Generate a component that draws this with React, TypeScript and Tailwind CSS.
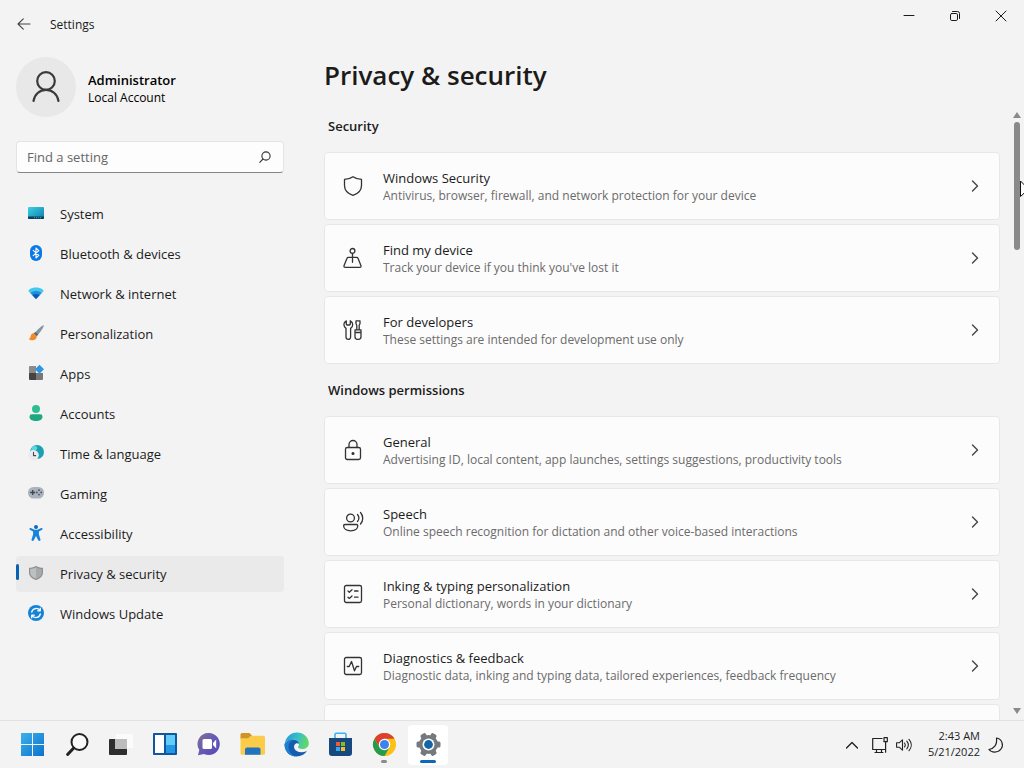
import type { ReactNode } from "react";

const stroke = {
  fill: "none",
  stroke: "currentColor",
  strokeLinecap: "round" as const,
  strokeLinejoin: "round" as const,
};

const navItems: { label: string; icon: ReactNode }[] = [
  {
    label: "System",
    icon: (
      <>
        <defs>
          <linearGradient id="sys" x1="0" y1="0" x2="1" y2="1">
            <stop offset="0" stopColor="#3fd0e8" />
            <stop offset="1" stopColor="#0c7fa6" />
          </linearGradient>
        </defs>
        <rect x="0" y="2" width="16" height="12" rx="1" fill="url(#sys)" />
        <path d="M0 11.500h16v1.500a1 1 0 0 1-1 1H1a1 1 0 0 1-1-1z" fill="#0b3f5c" />
        <path d="M6 12.700h1M8 12.700h1M10 12.700h1M12 12.700h1" stroke="#4cc3e0" strokeWidth=".8" />
      </>
    ),
  },
  {
    label: "Bluetooth & devices",
    icon: (
      <>
        <rect x="2" y="0" width="12" height="16" rx="6" fill="#0a78e6" />
        <path d="M5.200 5.300l5.600 5.100L8 13V3l2.800 2.600-5.600 5.100" {...stroke} stroke="#fff" strokeWidth="1.100" />
      </>
    ),
  },
  {
    label: "Network & internet",
    icon: (
      <>
        <path d="M.8 6.400C.2 5.600.6 5 1.400 4.400c4-2.600 9.200-2.600 13.200 0 .8.600 1.200 1.200.6 2L8 14z" fill="#42c8ea" />
        <path d="M2.400 8.100c3.200-2.700 8-2.700 11.200 0L8 14z" fill="#1f8fdc" />
        <path d="M4.400 10.200c2.200-1.600 5-1.600 7.200 0L8 14z" fill="#1456b8" />
      </>
    ),
  },
  {
    label: "Personalization",
    icon: (
      <>
        <path d="M15.800.3c-.9-.6-7.300 5-9.500 8.200l2.600 2.400C11.500 8.500 16.500 1.400 15.800.3z" fill="#8497a5" />
        <path d="M7.300 7l2.800 2.500-1.500 1.700-3-2.700z" fill="#5b6770" />
        <path d="M5.600 8.200c-2 .2-2.700 1.500-3 3-.2 1.300-.8 2.200-1.900 2.700 2.600 2.400 8.300 1.600 8-3z" fill="#f08a2c" />
      </>
    ),
  },
  {
    label: "Apps",
    icon: (
      <>
        <path d="M2 1h6v7H1V2a1 1 0 0 1 1-1z" fill="#8b8b8b" />
        <path d="M1 8h7v7H2a1 1 0 0 1-1-1z" fill="#444" />
        <path d="M8 8h7v6a1 1 0 0 1-1 1H8z" fill="#777" />
        <path d="M11.500-.3L16 4.200l-4.500 4.500L7 4.200z" fill="#2b95e6" />
      </>
    ),
  },
  {
    label: "Accounts",
    icon: (
      <>
        <circle cx="8" cy="4" r="4" fill="#2dbf93" />
        <path d="M1.500 11.500A2.300 2.300 0 0 1 3.800 9.300h8.400a2.300 2.300 0 0 1 2.300 2.200C14.500 14.500 12 16 8 16s-6.500-1.500-6.500-4.500z" fill="#1fa87f" />
      </>
    ),
  },
  {
    label: "Time & language",
    icon: (
      <>
        <circle cx="9" cy="7" r="7" fill="#1ba0b2" />
        <path d="M5 1.500c3-1.500 5 .5 4 2.500S6 6 4 7 2 5 5 1.500z" fill="#5fd6dc" />
        <circle cx="5.500" cy="10.200" r="5.300" fill="#eceaee" />
        <path d="M5.500 7.300v3.300h2.200" {...stroke} stroke="#4a4a55" strokeWidth="1.100" />
      </>
    ),
  },
  {
    label: "Gaming",
    icon: (
      <>
        <rect x="0" y="2" width="16" height="11.500" rx="5.500" fill="#aab3bc" />
        <path d="M4.700 5v5M2.200 7.500h5" stroke="#3d464f" strokeWidth="1.300" />
        <g fill="#4b545d">
          <circle cx="11" cy="5.200" r=".9" />
          <circle cx="11" cy="9.600" r=".9" />
          <circle cx="8.900" cy="7.400" r=".9" />
          <circle cx="13.200" cy="7.400" r=".9" />
        </g>
      </>
    ),
  },
  {
    label: "Accessibility",
    icon: (
      <>
        <circle cx="8" cy="2" r="2" fill="#1469b8" />
        <path d="M2.800 3L6.500 4.700h3L13.200 3c1.300-.4 2 1.200.9 1.800L10.900 6.500v3l1.600 5.100c.3 1.400-1.700 2-2.300.7L8 11l-2.200 4.300c-.6 1.300-2.600.7-2.300-.7l1.600-5.100v-3L1.900 4.800C.8 4.200 1.500 2.600 2.800 3z" fill="#1883dc" />
      </>
    ),
  },
  {
    label: "Privacy & security",
    icon: (
      <>
        <path d="M8 .8c2 1.500 4.300 2 7 2v4.700c0 3.600-2.500 6-7 7.500C3.500 13.500 1 11.100 1 7.500V2.800c2.700 0 5-.5 7-2z" fill="#8d9192" />
        <path d="M8 2.200c1.700 1.100 3.500 1.600 5.800 1.700v3.600c0 3-2 4.900-5.800 6.200z" fill="#a6aaab" />
        <path d="M8 2.200C6.300 3.300 4.500 3.800 2.200 3.900v3.600c0 3 2 4.900 5.800 6.200z" fill="#bcc0c1" />
      </>
    ),
  },
  {
    label: "Windows Update",
    icon: (
      <>
        <circle cx="8" cy="8" r="8" fill="#1584d8" />
        <path d="M3.700 7A4.600 4.600 0 0 1 12 5.500M12.300 9A4.600 4.600 0 0 1 4 10.500M12.300 3.200v2.600H9.700M3.700 12.800v-2.600h2.600" {...stroke} stroke="#fff" strokeWidth="1.300" />
      </>
    ),
  },
];

type Row = { title: string; text: string; icon: ReactNode };

const securityRows: Row[] = [
  {
    title: "Windows Security",
    text: "Antivirus, browser, firewall, and network protection for your device",
    icon: <path d="M10 .7c2.300 1.700 5 2.600 8.500 2.700v6c0 4.600-3 8-8.500 10-5.500-2-8.500-5.400-8.500-10v-6C5 3.300 7.700 2.400 10 .7z" />,
  },
  {
    title: "Find my device",
    text: "Track your device if you think you've lost it",
    icon: (
      <>
        <circle cx="9.500" cy="2.900" r="2.400" />
        <path d="M9.500 5.300v9M5.400 9.300h8.200a1.500 1.500 0 0 1 1.400 1l2.900 7.200c.4 1.100-.1 1.800-1.100 1.800H2.200c-1 0-1.500-.7-1.100-1.800L4 10.300a1.500 1.500 0 0 1 1.400-1z" />
      </>
    ),
  },
  {
    title: "For developers",
    text: "These settings are intended for development use only",
    icon: (
      <>
        <path d="M3.300.8C1.600 1.600.9 3 .9 4.600c0 1.700.9 3 2.100 3.800v8.700a2.300 2.300 0 0 0 4.600 0V8.400C9 7.600 9.700 6.300 9.700 4.600 9.700 3 9 1.600 7.300.8v3.400L6.500 5H4.100l-.8-.8z" />
        <path d="M13 .8h4v3l-.8 1.400v4.600h-2.400V5.200L13 3.800zM12 9.800h6v7a2.500 2.500 0 0 1-2.500 2.500h-1A2.500 2.500 0 0 1 12 16.800zM12 12.500h6" />
      </>
    ),
  },
];

const permissionRows: Row[] = [
  {
    title: "General",
    text: "Advertising ID, local content, app launches, settings suggestions, productivity tools",
    icon: (
      <>
        <rect x="2.500" y="7.500" width="15" height="12" rx="1.800" />
        <path d="M6 7.500V4.500a4 4 0 0 1 8 0v3" />
        <circle cx="10" cy="13.500" r=".9" fill="currentColor" />
      </>
    ),
  },
  {
    title: "Speech",
    text: "Online speech recognition for dictation and other voice-based interactions",
    icon: (
      <>
        <circle cx="7.500" cy="6" r="3.900" />
        <path d="M2 12.500h11.500c.8 0 1.300.6 1.300 1.300 0 3-2.900 5-7 5s-7.200-2-7.200-5c0-.7.600-1.300 1.400-1.300zM14.500 2.500c1.600 2 1.600 5 0 7M17.500.5c3 3.300 3 8 0 11.500" />
      </>
    ),
  },
  {
    title: "Inking & typing personalization",
    text: "Personal dictionary, words in your dictionary",
    icon: (
      <>
        <rect x="1.500" y="1.500" width="17" height="17" rx="1.800" />
        <path d="M5 7l1.300 1.200L9 5.800M11.500 7H15M5 13.200l1.300 1.200L9 12M11.500 13.200H15" />
      </>
    ),
  },
  {
    title: "Diagnostics & feedback",
    text: "Diagnostic data, inking and typing data, tailored experiences, feedback frequency",
    icon: (
      <>
        <rect x="1.500" y="1.500" width="17" height="17" rx="1.800" />
        <path d="M4.300 10.500h1.900L8.500 5.500l3 9.300 2-4.300h2.200" />
      </>
    ),
  },
];

const taskbarApps: { name: string; icon: ReactNode; state?: "open" | "active" }[] = [
  {
    name: "Start",
    icon: (
      <>
        <defs>
          <linearGradient id="win" x1="0" y1="0" x2="24" y2="24" gradientUnits="userSpaceOnUse">
            <stop offset="0" stopColor="#3fb4ec" />
            <stop offset="1" stopColor="#0b72cc" />
          </linearGradient>
        </defs>
        <path d="M1 1h11v11H1zM13 1h11v11H13zM1 13h11v11H1zM13 13h11v11H13z" fill="url(#win)" />
      </>
    ),
  },
  {
    name: "Search",
    icon: (
      <>
        <circle cx="15.500" cy="10" r="8" fill="#fafafa" stroke="#222" strokeWidth="2" />
        <path d="M9.500 16.200L3.600 22.500" stroke="#222" strokeWidth="3" strokeLinecap="round" />
      </>
    ),
  },
  {
    name: "Task view",
    icon: (
      <>
        <path d="M8 2h17v14H8z" fill="#fbfbfb" />
        <rect x="1" y="7" width="18" height="16" rx="1" fill="#2e2e2e" />
        <path d="M7 7h12v10H7z" fill="#bcbcbc" />
      </>
    ),
  },
  {
    name: "Widgets",
    icon: (
      <>
        <rect x="1" y="1" width="24" height="22" rx="1" fill="#10579c" />
        <path d="M3 3h9v18H3z" fill="#fff" />
        <path d="M14 3h9v10h-9z" fill="#62cdf8" />
        <path d="M14 13h9v8h-9z" fill="#2199e6" />
      </>
    ),
  },
  {
    name: "Chat",
    icon: (
      <>
        <defs>
          <linearGradient id="chat" x1="0" y1="0" x2="1" y2="1">
            <stop offset="0" stopColor="#83728f" />
            <stop offset=".5" stopColor="#6659b8" />
            <stop offset="1" stopColor="#5346b4" />
          </linearGradient>
        </defs>
        <path d="M13 1a11 11 0 1 1-5 20.900L2 23.300 3.300 18A11 11 0 0 1 13 1z" fill="url(#chat)" />
        <rect x="6.500" y="7" width="9.500" height="10" rx="1.500" fill="#fff" />
        <path d="M17 11l3.200-3.500v9L17 13z" fill="#fff" />
      </>
    ),
  },
  {
    name: "File Explorer",
    icon: (
      <>
        <path d="M.5 2.500A1.500 1.500 0 0 1 2 1h7.500L12 3.500 9 7H.5z" fill="#cf9423" />
        <path d="M.5 6.300H8l3-2.500h12.500A1.500 1.500 0 0 1 25 5.300v15.900a1.500 1.500 0 0 1-1.500 1.500H2a1.500 1.500 0 0 1-1.500-1.500z" fill="#fbcb4a" />
        <path d="M5 17.500a2 2 0 0 1 2-2h11.500a2 2 0 0 1 2 2v5.200H5z" fill="#2173c0" />
      </>
    ),
  },
  {
    name: "Edge",
    icon: (
      <>
        <defs>
          <linearGradient id="edgeTop" x1="0" y1="0" x2="1" y2=".3">
            <stop offset="0" stopColor="#2295d8" />
            <stop offset=".55" stopColor="#34bfcb" />
            <stop offset="1" stopColor="#62d76c" />
          </linearGradient>
        </defs>
        <path d="M.9 11C2 4.800 7 .5 12.800.5c6.800 0 12 5 12 10.500 0 4-3 6-6.500 6-2.700 0-4.200-1-4.200-2 0-.8 1-1 1-2.900C14.800 9.300 12 7.500 9 7.500c-4 0-7 1.200-8.100 3.500z" fill="url(#edgeTop)" />
        <path d="M.6 12C2 9 5.500 7.400 9 7.500c3.300.1 6 2.200 6.100 4.500-.8-.7-2-1-3.100-.5-2 .9-2.400 3.300-1.500 5.300 1.600 3.400 7 4.700 12.300 2.300-2 3.300-5.900 5.400-10.300 5.400C5.500 24.500.2 19 .6 12z" fill="#155cae" />
        <path d="M9.500 8c-4 1.500-5.800 5-4.600 9.300 1 3.800 3.800 6.600 7.600 7.200C5.500 24.500.2 19 .6 12 2 9 6 7.200 9.500 8z" fill="#1a80cf" />
      </>
    ),
  },
  {
    name: "Store",
    icon: (
      <>
        <path d="M7 7V2.500A1.200 1.200 0 0 1 8.200 1.300h8.600A1.200 1.200 0 0 1 18 2.500V7" fill="none" stroke="#38b5ea" strokeWidth="1.600" />
        <path d="M1 6h23v15a3 3 0 0 1-3 3H4a3 3 0 0 1-3-3z" fill="#17497e" />
        <path d="M8 10h4v4H8z" fill="#ef5a36" />
        <path d="M13 10h4v4h-4z" fill="#83bd25" />
        <path d="M8 15h4v4H8z" fill="#32a9ea" />
        <path d="M13 15h4v4h-4z" fill="#fbbb22" />
      </>
    ),
  },
  {
    name: "Chrome",
    state: "open",
    icon: (
      <>
        <circle cx="12.500" cy="12.500" r="11.500" fill="#fbc116" />
        <path d="M2.540 6.750A11.500 11.500 0 0 1 22.460 6.750H12.500L7.520 15.380z" fill="#dd4032" />
        <path d="M2.540 6.750A11.500 11.500 0 0 0 12.500 24l4.980-8.620H7.520z" fill="#259c4c" />
        <circle cx="12.500" cy="12.500" r="5.700" fill="#fff" />
        <circle cx="12.500" cy="12.500" r="4.500" fill="#3b82ec" />
      </>
    ),
  },
  {
    name: "Settings",
    state: "active",
    icon: (
      <>
        <g fill="#75797d">
          <circle cx="12.500" cy="12.500" r="9.500" />
          <rect x="9.500" y=".5" width="6" height="24" rx="1.500" transform="rotate(30 12.500 12.500)" />
          <rect x="9.500" y=".5" width="6" height="24" rx="1.500" transform="rotate(90 12.500 12.500)" />
          <rect x="9.500" y=".5" width="6" height="24" rx="1.500" transform="rotate(150 12.500 12.500)" />
        </g>
        <circle cx="12.500" cy="12.500" r="6" fill="#fff" />
        <circle cx="12.500" cy="12.500" r="4.400" fill="#1664a8" />
      </>
    ),
  },
];

function SettingRow({ row }: { row: Row }) {
  return (
    <button className="flex h-[68px] w-full shrink-0 items-center rounded border border-[#e7e7e7] bg-[#fcfcfc] px-[18px] text-left">
      <svg className="mr-5 h-5 w-5 shrink-0 overflow-visible text-[#333]" viewBox="0 0 20 20" {...stroke} strokeWidth="1.300">
        {row.icon}
      </svg>
      <span className="min-w-0 flex-1 pt-0.5">
        <span className="block text-[13px] leading-[18px] text-[#1b1b1b]">{row.title}</span>
        <span className="block truncate text-[12px] leading-[18px] text-[#6b6b6b]">{row.text}</span>
      </span>
      <svg className="h-3 w-3 text-[#444]" viewBox="0 0 12 12" {...stroke} strokeWidth="1.400">
        <path d="M3.500 1l5 5-5 5" />
      </svg>
    </button>
  );
}

function Section({ title, children }: { title: string; children: ReactNode }) {
  return (
    <section className="shrink-0">
      <h2 className="flex h-[52px] items-center px-1 pt-0.5 text-[13px] font-semibold text-[#1b1b1b]">{title}</h2>
      <div className="flex flex-col gap-1">{children}</div>
    </section>
  );
}

function WindowButton({ label, children }: { label: string; children: ReactNode }) {
  return (
    <button aria-label={label} className="flex h-8 w-[46px] items-center justify-center">
      <svg className="h-3 w-3" viewBox="0 0 12 12" {...stroke}>
        {children}
      </svg>
    </button>
  );
}

export default function App() {
  return (
    <div className="relative flex h-screen flex-col overflow-hidden bg-[#f3f3f3] font-['Open_Sans','Noto_Sans',sans-serif] text-[#1b1b1b]">
      <header className="flex h-12 shrink-0 items-start justify-between">
        <div className="flex h-12 items-center">
          <button aria-label="Back" className="flex h-12 w-12 items-center justify-center text-[#444]">
            <svg className="h-3.5 w-3.5" viewBox="0 0 14 14" {...stroke} strokeWidth="1.100">
              <path d="M13 7H1M6.300 1.800L1 7l5.300 5.200" />
            </svg>
          </button>
          <span className="pt-0.5 pl-0.5 text-[12px]">Settings</span>
        </div>
        <div className="flex">
          <WindowButton label="Minimize">
            <path d="M1 5.500h10" />
          </WindowButton>
          <WindowButton label="Restore">
            <rect x="1.500" y="3.500" width="7" height="7" rx="1.300" />
            <path d="M3.500 1.500h5A2 2 0 0 1 10.500 3.500v5" />
          </WindowButton>
          <WindowButton label="Close">
            <path d="M1 1l10 10M11 1L1 11" />
          </WindowButton>
        </div>
      </header>

      <div className="flex min-h-0 flex-1">
        <aside className="flex w-[300px] shrink-0 flex-col px-4 pt-[9px]">
          <div className="flex items-center gap-3">
            <div className="flex h-[60px] w-[60px] items-center justify-center rounded-full bg-[#e8e8e8]">
              <svg className="h-8 w-7 text-[#3a3a3a]" viewBox="0 0 28 32" {...stroke} strokeWidth="2.200">
                <circle cx="14" cy="10" r="8.800" />
                <path d="M1.500 30C2.500 23.500 7.500 18.800 14 18.800S25.500 23.500 26.500 30" />
              </svg>
            </div>
            <div className="pt-1 text-black">
              <p className="text-[13px] leading-[18px] font-semibold">Administrator</p>
              <p className="text-[12px] leading-[18px]">Local Account</p>
            </div>
          </div>

          <div className="mt-6 flex h-8 shrink-0 items-center rounded border border-[#e4e4e4] border-b-[#868686] bg-[#fdfdfd] px-2.5">
            <input
              type="text"
              aria-label="Find a setting"
              placeholder="Find a setting"
              className="min-w-0 flex-1 bg-transparent pt-0.5 text-[13px] outline-none placeholder:text-[#666]"
            />
            <svg className="mr-0.5 h-3 w-3 text-[#333]" viewBox="0 0 12 12" {...stroke} strokeWidth="1.100">
              <circle cx="7" cy="5" r="4.100" />
              <path d="M4 8L.8 11.300" />
            </svg>
          </div>

          <nav className="mt-[23px] flex flex-col gap-1">
            {navItems.map((item) => {
              const selected = item.label === "Privacy & security";
              return (
                <a
                  key={item.label}
                  href="#"
                  className={
                    selected
                      ? "relative flex h-9 items-center gap-4 rounded bg-[#eaeaea] pb-0.5 pl-3 text-[13px]"
                      : "flex h-9 items-center gap-4 rounded pb-0.5 pl-3 text-[13px]"
                  }
                >
                  {selected && <span className="absolute top-2 left-0 h-4 w-[3px] rounded-full bg-[#0a62ae]" />}
                  <svg className="h-4 w-4 shrink-0 overflow-visible" viewBox="0 0 16 16">
                    {item.icon}
                  </svg>
                  <span className="pt-1">{item.label}</span>
                </a>
              );
            })}
          </nav>
        </aside>

        <main className="flex min-w-0 flex-1 flex-col pl-6">
          <h1 className="flex h-[52px] shrink-0 items-center pt-0.5 text-[26px] font-semibold">Privacy & security</h1>
          <div className="flex min-h-0 flex-1">
            <div className="flex min-w-0 flex-1 flex-col overflow-hidden">
              <Section title="Security">
                {securityRows.map((row) => (
                  <SettingRow key={row.title} row={row} />
                ))}
              </Section>
              <Section title="Windows permissions">
                {permissionRows.map((row) => (
                  <SettingRow key={row.title} row={row} />
                ))}
                <div className="h-[68px] rounded border border-[#e7e7e7] bg-[#fcfcfc]" />
              </Section>
            </div>
            <div className="ml-2.5 flex w-3.5 shrink-0 flex-col items-center pt-3 pb-1.5">
              <svg className="h-1.5 w-2 shrink-0" viewBox="0 0 8 6">
                <path d="M4 0l4 6H0z" fill="#8a8a8a" />
              </svg>
              <div className="mt-1 h-32 w-1.5 rounded-full bg-[#8a8a8a]" />
              <svg className="mt-auto h-1.5 w-2 shrink-0" viewBox="0 0 8 6">
                <path d="M0 0h8L4 6z" fill="#8a8a8a" />
              </svg>
            </div>
          </div>
        </main>
      </div>

      <footer className="flex h-12 shrink-0 items-center justify-between border-t border-[#e2e2e2] bg-[#f3f3f3] pr-5 pl-3">
        <div className="flex gap-1">
          {taskbarApps.map((app) => (
            <button
              key={app.name}
              aria-label={app.name}
              className={
                app.state === "active"
                  ? "relative flex h-10 w-10 items-center justify-center rounded bg-white"
                  : "relative flex h-10 w-10 items-center justify-center rounded"
              }
            >
              <svg className="h-[25px] w-[25px] overflow-visible" viewBox="0 0 25 25">
                {app.icon}
              </svg>
              {app.state === "open" && <span className="absolute bottom-0.5 h-[3px] w-1.5 rounded-full bg-[#8a8a8a]" />}
              {app.state === "active" && <span className="absolute bottom-0.5 h-[3px] w-4 rounded-full bg-[#0f67b8]" />}
            </button>
          ))}
        </div>
        <div className="flex items-center text-[#222]">
          <button aria-label="Show hidden icons" className="mr-3.5">
            <svg className="h-3 w-3" viewBox="0 0 12 12" {...stroke} strokeWidth="1.400">
              <path d="M.5 9L6 3.500 11.500 9" />
            </svg>
          </button>
          <button aria-label="Network" className="mr-2">
            <svg className="h-4 w-4" viewBox="0 0 16 16" {...stroke} strokeWidth="1.200">
              <path d="M10 1.500H.7V12.500h12M4.500 12.500v3M9.500 12.500v3M3 15.500h8M12 .7h3.300v4H12zM13.600 4.700v10.500" />
            </svg>
          </button>
          <button aria-label="Volume" className="mr-4">
            <svg className="h-4 w-4" viewBox="0 0 16 16" {...stroke} strokeWidth="1.100">
              <path d="M.6 5.800h2.600l3.300-3v10.400l-3.300-3H.6zM8.500 6c.9 1.200.9 2.800 0 4M10.800 4.200c1.800 2.200 1.800 5.400 0 7.600M13 2.300c3 3.400 3 8 0 11.400" />
            </svg>
          </button>
          <div className="mr-2 pb-0.5 text-right text-[11px] leading-4">
            <p>2:43 AM</p>
            <p>5/21/2022</p>
          </div>
          <button aria-label="Focus assist">
            <svg className="h-4 w-4" viewBox="0 0 16 16" {...stroke} strokeWidth="1.200">
              <path d="M8.500 1C14 2 16 8 13 12c-3 4-9.500 4-12 .5C5.500 12 9.500 8 8.500 1z" />
            </svg>
          </button>
        </div>
      </footer>

      {/* mouse pointer, cut off by the right edge */}
      <svg className="absolute top-[180px] -right-2 h-[19px] w-3" viewBox="0 0 12 19">
        <path d="M.5 1v15.500l3.600-3.300 2.400 5 2.300-1-2.300-5h5z" fill="#fff" stroke="#111" />
      </svg>
    </div>
  );
}
